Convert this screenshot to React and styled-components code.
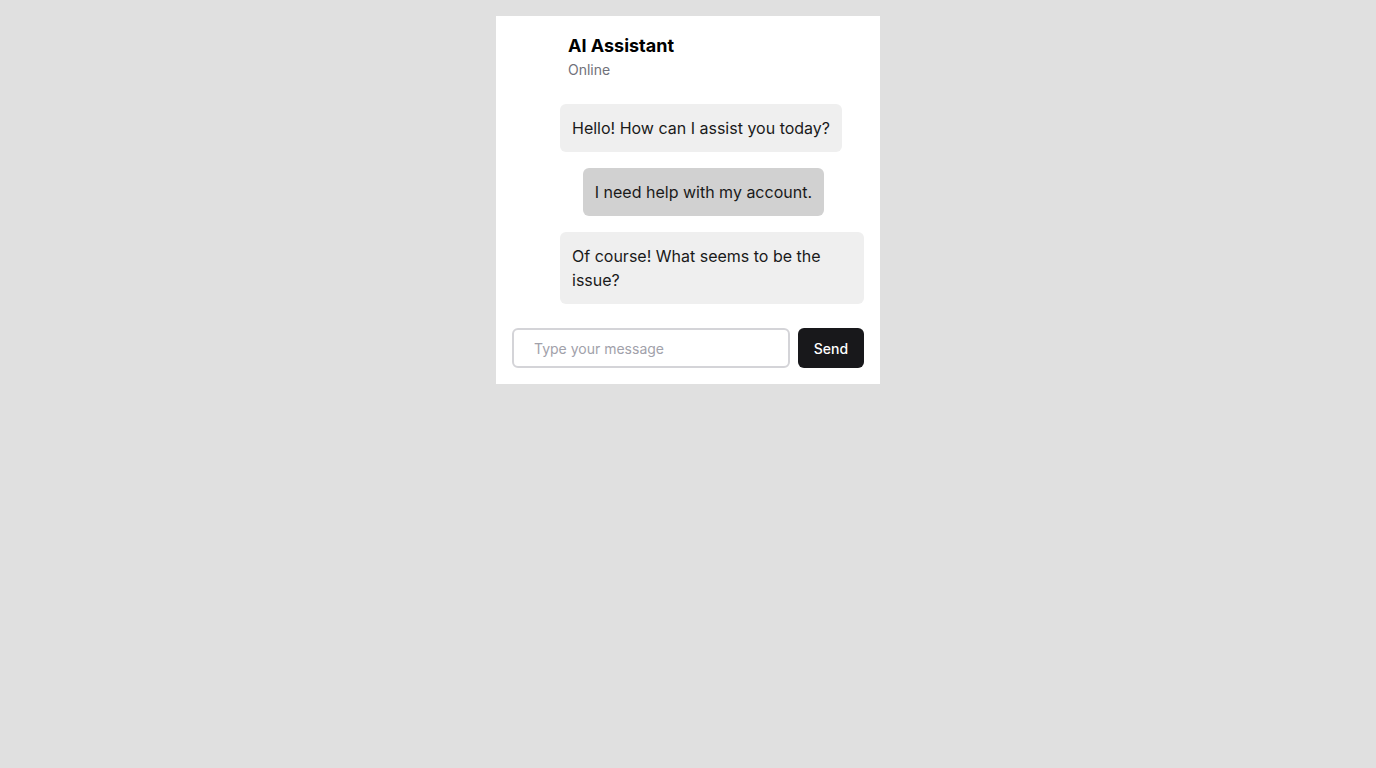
import React from 'react';
import styled, { createGlobalStyle } from 'styled-components';

const GlobalStyle = createGlobalStyle`
  body {
    margin: 0;
    background: #e0e0e0;
    font-family: Inter, "Noto Sans", sans-serif;
    color: #1a1a1a;
  }
`;

const Page = styled.div`
  display: flex;
  justify-content: center;
  padding-top: 16px;
  min-height: 752px;
`;

const Card = styled.div`
  width: 384px;
  box-sizing: border-box;
  background: #ffffff;
  padding: 16px;
  display: flex;
  flex-direction: column;
  height: 368px;
`;

const Header = styled.div`
  display: flex;
  align-items: center;
  gap: 8px;
  margin-bottom: 24px;
`;

const AvatarSlot = styled.div`
  width: ${props => props.size}px;
  height: ${props => props.size}px;
  flex-shrink: 0;
`;

const HeaderText = styled.div`
  display: flex;
  flex-direction: column;
`;

const Title = styled.div`
  font-size: 18px;
  line-height: 28px;
  font-weight: 700;
  color: #000;
`;

const Status = styled.div`
  font-size: 14px;
  line-height: 20px;
  color: #71717a;
`;

const Messages = styled.div`
  display: flex;
  flex-direction: column;
  gap: 16px;
  margin-bottom: 24px;
`;

const Row = styled.div`
  display: flex;
  justify-content: ${props => (props.fromUser ? 'flex-end' : 'flex-start')};
  padding-left: ${props => (props.fromUser ? 0 : 48)}px;
  padding-right: ${props => (props.fromUser ? 40 : 0)}px;
`;

const Bubble = styled.div`
  background: ${props => (props.fromUser ? '#d1d1d1' : '#efefef')};
  border-radius: 6px;
  padding: 12px;
  font-size: 16px;
  line-height: 24px;
  color: #1a1a1a;
`;

const InputBar = styled.form`
  display: flex;
  gap: 8px;
`;

const MessageInput = styled.input`
  flex: 1;
  height: 40px;
  box-sizing: border-box;
  border: 2px solid #d4d4d8;
  border-radius: 6px;
  padding: 0 20px;
  font-family: Inter, "Noto Sans", sans-serif;
  font-size: 14px;
  color: #1a1a1a;
  outline: none;

  &::placeholder {
    color: #a1a1aa;
  }
`;

const SendButton = styled.button`
  height: 40px;
  width: 66px;
  border: none;
  border-radius: 6px;
  background: #18181b;
  color: #ffffff;
  font-family: Inter, "Noto Sans", sans-serif;
  font-size: 14px;
  font-weight: 500;
  cursor: pointer;
`;

const messages = [
  { id: 1, fromUser: false, text: 'Hello! How can I assist you today?' },
  { id: 2, fromUser: true, text: 'I need help with my account.' },
  { id: 3, fromUser: false, text: 'Of course! What seems to be the issue?' },
];

const App = () => (
  <Page>
    <GlobalStyle />
    <Card>
      <Header>
        <AvatarSlot size={48} />
        <HeaderText>
          <Title>AI Assistant</Title>
          <Status>Online</Status>
        </HeaderText>
      </Header>

      <Messages>
        {messages.map(m => (
          <Row key={m.id} fromUser={m.fromUser}>
            <Bubble fromUser={m.fromUser}>{m.text}</Bubble>
          </Row>
        ))}
      </Messages>

      <InputBar onSubmit={e => e.preventDefault()}>
        <MessageInput placeholder="Type your message" />
        <SendButton type="submit">Send</SendButton>
      </InputBar>
    </Card>
  </Page>
);

export default App;
